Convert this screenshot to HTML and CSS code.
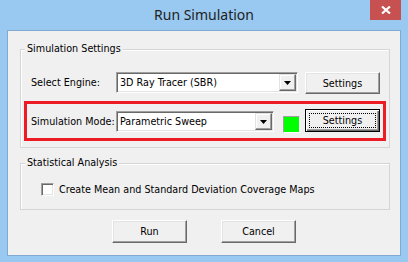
FILE: index.html
```html
<!DOCTYPE html>
<html lang="en">
<head>
    <meta charset="UTF-8">
    <meta name="viewport" content="width=device-width, initial-scale=1.0">
    <title>Run Simulation</title>
    <link rel="stylesheet" href="styles.css">
</head>
<body>
    <div class="window">
        <div class="titlebar">
            <span class="title">Run Simulation</span>
            <span class="close">
                <svg width="10" height="8" viewBox="0 0 10 8"><path d="M1 0.5 L9 7.5 M9 0.5 L1 7.5" stroke="#fff" stroke-width="2.2" fill="none"/></svg>
            </span>
        </div>
        <div class="client">
            <div class="group group-sim">
                <span class="group-title">Simulation Settings</span>
                <div class="row row-engine">
                    <span class="label">Select Engine:</span>
                    <div class="combo combo-engine">
                        <span class="combo-text">3D Ray Tracer (SBR)</span>
                        <span class="combo-btn"><svg width="7" height="4" viewBox="0 0 7 4"><path d="M0 0 H7 L3.5 4 Z" fill="#000"/></svg></span>
                    </div>
                    <button class="btn">Settings</button>
                </div>
                <div class="row row-mode">
                    <span class="label">Simulation Mode:</span>
                    <div class="combo combo-mode">
                        <span class="combo-text">Parametric Sweep</span>
                        <span class="combo-btn"><svg width="7" height="4" viewBox="0 0 7 4"><path d="M0 0 H7 L3.5 4 Z" fill="#000"/></svg></span>
                    </div>
                    <span class="swatch"></span>
                    <button class="btn btn-focus"><span class="focus-rect">Settings</span></button>
                </div>
            </div>
            <div class="group group-stat">
                <span class="group-title">Statistical Analysis</span>
                <label class="check">
                    <span class="check-box"></span>
                    <span>Create Mean and Standard Deviation Coverage Maps</span>
                </label>
            </div>
            <div class="actions">
                <button class="btn">Run</button>
                <button class="btn">Cancel</button>
            </div>
        </div>
    </div>
</body>
</html>
```

FILE: styles.css
```css
body {
    margin: 0;
    padding: 0;
    font-family: "DejaVu Sans Condensed", "DejaVu Sans", sans-serif;
    font-stretch: condensed;
    font-size: 10.7px;
    color: #000;
}
.window {
    width: 408px;
    height: 262px;
    background-color: #99c8f0;
    box-sizing: border-box;
}
.titlebar {
    height: 30px;
    display: grid;
    grid-template-columns: 1fr auto 1fr;
}
.title {
    grid-column: 2;
    font-family: "Noto Sans", sans-serif;
    font-stretch: normal;
    font-size: 14px;
    line-height: 30px;
    color: #222;
}
.close {
    grid-column: 3;
    justify-self: end;
    width: 31px;
    height: 20px;
    margin-right: 7px;
    background-color: #c75050;
    display: flex;
    justify-content: center;
    align-items: center;
}
.client {
    margin: 0 7px;
    height: 226px;
    box-sizing: border-box;
    border: 1px solid #82a9d3;
    background-color: #f0f0f0;
    padding-top: 18px;
}
.group {
    position: relative;
    margin: 0 10px 0 12px;
    border: 1px solid #d5d5d5;
    box-shadow: inset 1px 1px #fff;
}
.group-title {
    position: absolute;
    top: -8px;
    left: 4px;
    padding: 0 2px;
    line-height: 14px;
    background-color: #f0f0f0;
}
.group-sim {
    height: 99px;
    box-sizing: border-box;
    padding-top: 22px;
}
.row {
    display: flex;
    align-items: flex-start;
}
.label {
    flex: 0 0 85px;
    line-height: 21px;
    white-space: nowrap;
}
.row-engine {
    margin-left: 10px;
    height: 22px;
}
.row-mode {
    margin: 7px 3px 0 3px;
    height: 40px;
    box-sizing: border-box;
    border: 3px solid #ed1c24;
    padding-left: 4px;
}
.row-mode .label {
    margin-top: 7px;
}
.combo {
    height: 21px;
    box-sizing: border-box;
    border: 1px solid;
    border-color: #a0a0a0 #fff #fff #a0a0a0;
    box-shadow: inset 1px 1px #696969, inset -1px -1px #e3e3e3;
    background-color: #fff;
    display: flex;
    align-items: center;
    padding: 1px;
}
.combo-text {
    flex: 1;
    padding-left: 2px;
    white-space: nowrap;
}
.combo-btn {
    width: 17px;
    height: 17px;
    box-sizing: border-box;
    border: 1px solid;
    border-color: #e3e3e3 #696969 #696969 #e3e3e3;
    box-shadow: inset -1px -1px #a0a0a0, inset 1px 1px #fff;
    background-color: #f0f0f0;
    display: flex;
    justify-content: center;
    align-items: center;
}
.combo-engine {
    width: 182px;
    margin-right: 7px;
}
.combo-mode {
    width: 158px;
    margin-top: 7px;
    margin-right: 9px;
}
.swatch {
    width: 17px;
    height: 17px;
    box-sizing: border-box;
    margin-top: 12px;
    margin-right: 5px;
    border: 1px solid;
    border-color: #a0a0a0 #fff #fff #a0a0a0;
    background-color: #00ff00;
}
.btn {
    width: 75px;
    height: 22px;
    padding: 0;
    font: inherit;
    color: #000;
    background-color: #f0f0f0;
    border: 1px solid;
    border-color: #fff #696969 #696969 #fff;
    box-shadow: inset -1px -1px #a0a0a0, inset 1px 1px #e3e3e3;
}
.btn-focus {
    height: 23px;
    margin-top: 5px;
    border: 1px solid #000;
    box-shadow: inset 1px 1px #fff, inset -1px -1px #696969, inset -2px -2px #a0a0a0;
    padding: 3px;
}
.focus-rect {
    display: block;
    height: 100%;
    box-sizing: border-box;
    border: 1px dotted #000;
    line-height: 13px;
}
.group-stat {
    margin-top: 15px;
    height: 47px;
    box-sizing: border-box;
    padding: 19px 0 0 20px;
}
.check {
    display: flex;
    align-items: center;
    height: 13px;
}
.check-box {
    width: 13px;
    height: 13px;
    box-sizing: border-box;
    margin-right: 5px;
    border: 1px solid;
    border-color: #a0a0a0 #fff #fff #a0a0a0;
    box-shadow: inset 1px 1px #696969, inset -1px -1px #e3e3e3;
    background-color: #fff;
}
.actions {
    display: flex;
    justify-content: center;
    gap: 34px;
    margin-top: 10px;
}
.actions .btn {
    height: 23px;
}
```
